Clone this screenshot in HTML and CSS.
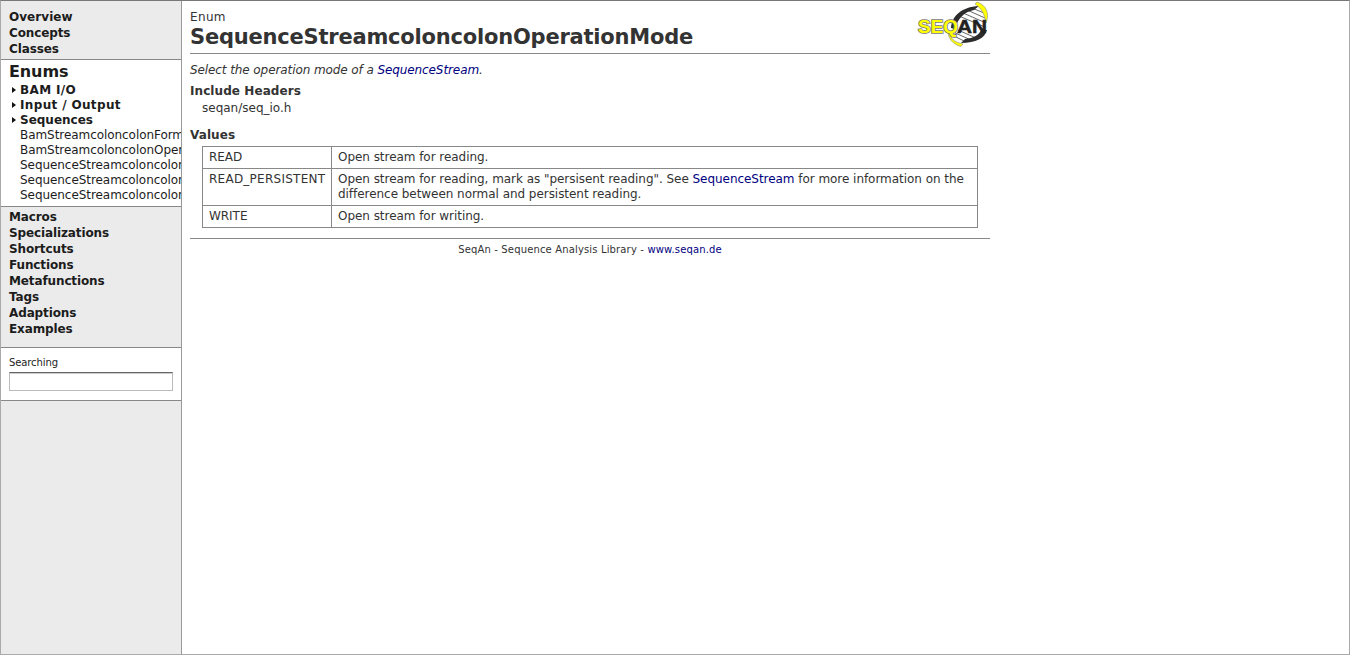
FILE: index.html
```html
<!DOCTYPE html>
<html lang="en">
<head>
<meta charset="utf-8">
<title>SequenceStreamcoloncolonOperationMode</title>
<link rel="stylesheet" href="styles.css">
</head>
<body>
<div class="frame">
  <nav class="sidebar">
    <div class="group group-top">
      <a class="nav wide">Overview</a>
      <a class="nav">Concepts</a>
      <a class="nav">Classes</a>
    </div>
    <div class="group group-open">
      <div class="open-title">Enums</div>
      <a class="sub spaced"><i class="arrow"></i>BAM I/O</a>
      <a class="sub spaced"><i class="arrow"></i>Input / Output</a>
      <a class="sub"><i class="arrow"></i>Sequences</a>
      <a class="leaf">BamStreamcoloncolonForm</a>
      <a class="leaf">BamStreamcoloncolonOper</a>
      <a class="leaf">SequenceStreamcoloncolon</a>
      <a class="leaf">SequenceStreamcoloncolon</a>
      <a class="leaf">SequenceStreamcoloncolon</a>
    </div>
    <div class="group group-bottom">
      <a class="nav">Macros</a>
      <a class="nav">Specializations</a>
      <a class="nav">Shortcuts</a>
      <a class="nav">Functions</a>
      <a class="nav">Metafunctions</a>
      <a class="nav">Tags</a>
      <a class="nav">Adaptions</a>
      <a class="nav">Examples</a>
    </div>
    <div class="search">
      <label for="q">Searching</label>
      <input id="q" type="text">
    </div>
  </nav>
  <main class="page">
    <header class="head">
      <div>
        <div class="kind">Enum</div>
        <h1>SequenceStreamcoloncolonOperationMode</h1>
      </div>
      <svg class="logo" width="74" height="48" viewBox="0 0 74 48">
        <path d="M36 32C35 17 45 7 62 5C73 12 71 33 47 42Z" fill="#fff"/>
        <g stroke="#666" stroke-width="1" fill="none">
          <path d="M56 7L68 12M51 9L69 17M47 12L70 22M43 15L69 26M37 31L55 39M42 29L60 37M36 34L50 41"/>
        </g>
        <path d="M35 27C36 15 45 6 63 5L58 9C48 11 42 17 39 28Z" fill="#2c2c2c"/>
        <path d="M71 29C69 37 60 42 45 42L49 38C58 37 63 34 65 29Z" fill="#2c2c2c"/>
        <path d="M61 1C70 4 74 12 70 22C68 12 66 8 59 3Z" fill="#ff0" stroke="#888" stroke-width=".6"/>
        <path d="M34 30C34 38 38 41 47 43L45 45.500C36 43 32 37 32 30Z" fill="#ff0" stroke="#888" stroke-width=".6"/>
        <text class="logo-seq" x="2" y="31.500" textLength="40" lengthAdjust="spacingAndGlyphs">SEQ</text>
        <text class="logo-an" x="41" y="32" textLength="30" lengthAdjust="spacingAndGlyphs">AN</text>
      </svg>
    </header>
    <p class="summary">Select the operation mode of a <a>SequenceStream</a>.</p>
    <h2>Include Headers</h2>
    <p class="include">seqan/seq_io.h</p>
    <h2 class="values-title">Values</h2>
    <table class="values">
      <tr><td class="key">READ</td><td>Open stream for reading.</td></tr>
      <tr><td class="key key-long">READ_PERSISTENT</td><td>Open stream for reading, mark as "persisent reading". See <a>SequenceStream</a> for more information on the<br>difference between normal and persistent reading.</td></tr>
      <tr><td class="key">WRITE</td><td>Open stream for writing.</td></tr>
    </table>
    <footer class="foot">SeqAn - Sequence Analysis Library - <a>www.seqan.de</a></footer>
  </main>
</div>
</body>
</html>
```
FILE: styles.css
```css
* { box-sizing: border-box; }
body {
  margin: 0;
  font: 12px/15px Verdana, "DejaVu Sans", sans-serif;
  color: #333;
  background: #fff;
}
.frame {
  display: flex;
  height: 655px;
  border: 1px solid #aaa;
  border-top-color: #777;
  overflow: hidden;
}
.sidebar {
  flex: none;
  width: 181px;
  background: #ebebeb;
  border-right: 1px solid #999;
  color: #1c1c1c;
}
.group { padding-left: 8px; overflow: hidden; }
.group-top { height: 58px; padding-top: 8px; }
.group-open {
  height: 148px;
  padding-top: 2px;
  background: #fff;
  border-top: 1px solid #888;
  border-bottom: 1px solid #888;
}
.group-bottom { height: 140px; padding-top: 2px; }
.nav { display: block; font-weight: bold; line-height: 16px; letter-spacing: -.12px; }
.nav.wide { letter-spacing: .05px; }
.open-title { font-size: 16px; font-weight: bold; line-height: 19px; margin-bottom: 2px; letter-spacing: -.1px; }
.sub { display: flex; align-items: center; font-weight: bold; }
.spaced { letter-spacing: .35px; white-space: pre; }
.arrow {
  width: 4px;
  margin: -2px 4px 0 3px;
  border: solid transparent;
  border-width: 3.5px 0 3.5px 4px;
  border-left-color: #111;
}
.leaf { display: block; margin-left: 11px; white-space: nowrap; letter-spacing: -.06px; }
.search {
  height: 54px;
  padding: 7px 8px 0;
  background: #fff;
  border-top: 1px solid #888;
  border-bottom: 1px solid #888;
  font-size: 10px;
}
.search label { display: block; line-height: 15px; letter-spacing: -.1px; }
.search input {
  display: block;
  width: 164px;
  height: 19px;
  margin-top: 2px;
  padding: 0 2px;
  border: 1px solid #bbb;
  border-top: 1px solid #666;
  background: #fff;
  box-shadow: inset 0 1px 0 #ccc;
}
.page { width: 808px; padding-left: 8px; }
.head {
  display: flex;
  justify-content: space-between;
  height: 53px;
  border-bottom: 1px solid #888;
}
.kind { padding-top: 9px; letter-spacing: .35px; }
h1 { margin: -1px 0 0; font-size: 21px; line-height: 27px; letter-spacing: -.21px; }
.logo { flex: none; }
.logo-seq, .logo-an { font: bold 18px "Liberation Sans", Arial, sans-serif; }
.logo-seq { fill: #ff0; stroke: #777; stroke-width: 1.6px; paint-order: stroke; }
.logo-an { fill: #222; stroke: #222; stroke-width: .5px; }
a { text-decoration: none; }
.page a { color: #000080; }
.summary { margin: 9px 0 0; font-style: italic; letter-spacing: -.09px; }
h2 { margin: 6px 0 0; font-size: 12px; line-height: 15px; letter-spacing: .08px; }
.include { margin: 2px 0 0 12px; }
.values-title { margin-top: 12px; }
.values {
  width: 776px;
  margin: 3px 0 0 12px;
  border-collapse: collapse;
  table-layout: fixed;
}
.values td {
  padding: 3px 6px;
  border: 1px solid #888;
  vertical-align: top;
  white-space: nowrap;
  letter-spacing: -.045px;
}
.values .key { width: 129px; }
.values .key-long { letter-spacing: .25px; }
.foot {
  margin-top: 10px;
  padding-top: 3px;
  border-top: 1px solid #888;
  font-size: 10px;
  text-align: center;
  letter-spacing: .15px;
}
```
